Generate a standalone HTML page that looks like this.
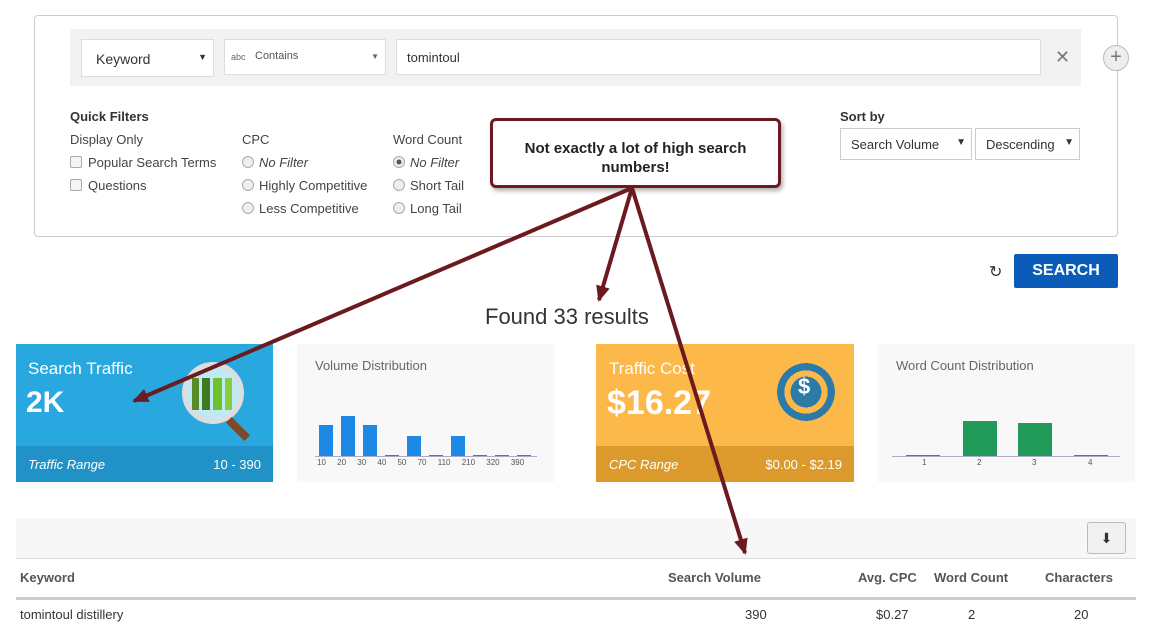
<!DOCTYPE html><html><head><style>
body{margin:0;width:1159px;height:633px;overflow:hidden;background:#fff;font-family:"Liberation Sans",sans-serif;position:relative;color:#333}
.a{position:absolute}
.box{border:1px solid #ccc;border-radius:4px}
.in{background:#fff;border:1px solid #ddd;font-size:13px}
.lbl{font-size:13px;color:#444}
.rd{display:inline-block;width:10px;height:10px;border:1px solid #aaa;border-radius:50%;background:#eee;vertical-align:-1px;margin-right:5px}
.cb{display:inline-block;width:10px;height:10px;border:1px solid #aaa;border-radius:2px;background:#f4f4f4;vertical-align:-1px;margin-right:6px}
.bar{position:absolute;bottom:0;background:#1e88e5;width:14px}
</style></head><body>
<div class="a box" style="left:34px;top:15px;width:1082px;height:220px"></div>
<div class="a" style="left:70px;top:29px;width:1011px;height:57px;background:#f2f2f2"></div>
<div class="a in" style="left:81px;top:39px;width:131px;height:36px"><span class="a" style="left:14px;top:11px;font-size:14px">Keyword</span><span class="a" style="right:6px;top:12px;font-size:9px">▼</span></div>
<div class="a in" style="left:224px;top:39px;width:160px;height:34px"><span class="a" style="left:6px;top:12px;font-size:9px;color:#666">abc</span><span class="a" style="left:30px;top:10px;font-size:11px;color:#555">Contains</span><span class="a" style="right:6px;top:12px;font-size:8px;color:#666">▼</span></div>
<div class="a in" style="left:396px;top:39px;width:643px;height:34px"><span class="a" style="left:10px;top:10px;font-size:13px">tomintoul</span></div>
<div class="a" style="left:1055px;top:47px;font-size:18px;color:#777">✕</div>
<div class="a" style="left:1103px;top:45px;width:24px;height:24px;border:1px solid #bbb;border-radius:50%;background:#eee;text-align:center;line-height:23px;font-size:20px;color:#777">+</div>
<div class="a" style="left:70px;top:109px;font-size:13px;font-weight:bold">Quick Filters</div>
<div class="a lbl" style="left:70px;top:132px">Display Only</div>
<div class="a lbl" style="left:70px;top:155px"><span class="cb"></span>Popular Search Terms</div>
<div class="a lbl" style="left:70px;top:178px"><span class="cb"></span>Questions</div>
<div class="a lbl" style="left:242px;top:132px">CPC</div>
<div class="a lbl" style="left:242px;top:155px"><span class="rd"></span><i>No Filter</i></div>
<div class="a lbl" style="left:242px;top:178px"><span class="rd"></span>Highly Competitive</div>
<div class="a lbl" style="left:242px;top:201px"><span class="rd"></span>Less Competitive</div>
<div class="a lbl" style="left:393px;top:132px">Word Count</div>
<div class="a lbl" style="left:393px;top:155px"><span class="rd" style="background:radial-gradient(#555 30%,#eee 40%)"></span><i>No Filter</i></div>
<div class="a lbl" style="left:393px;top:178px"><span class="rd"></span>Short Tail</div>
<div class="a lbl" style="left:393px;top:201px"><span class="rd"></span>Long Tail</div>
<div class="a" style="left:840px;top:109px;font-size:13px;font-weight:bold">Sort by</div>
<div class="a in" style="left:840px;top:128px;width:130px;height:30px;border-color:#ccc"><span class="a" style="left:10px;top:8px">Search Volume</span><span class="a" style="right:5px;top:8px;font-size:10px">▼</span></div>
<div class="a in" style="left:975px;top:128px;width:103px;height:30px;border-color:#ccc"><span class="a" style="left:10px;top:8px">Descending</span><span class="a" style="right:5px;top:8px;font-size:10px">▼</span></div>
<div class="a" style="left:490px;top:118px;width:285px;height:64px;border:3px solid #6b1a1f;border-radius:6px;background:#fff;box-shadow:2px 3px 4px rgba(0,0,0,.3);text-align:center;font-weight:bold;font-size:15px;color:#222"><div style="margin-top:18px;line-height:19px">Not exactly a lot of high search<br>numbers!</div></div>
<div class="a" style="left:989px;top:262px;font-size:16px;color:#333">↻</div>
<div class="a" style="left:1014px;top:254px;width:104px;height:34px;background:#0b5cb8;border-radius:2px;color:#fff;font-weight:bold;font-size:16px;text-align:center;line-height:34px">SEARCH</div>
<div class="a" style="left:485px;top:304px;font-size:22px;color:#333">Found 33 results</div>
<!-- blue card -->
<div class="a" style="left:16px;top:344px;width:257px;height:138px;background:#29a8e0;color:#fff">
<div class="a" style="left:12px;top:15px;font-size:17px">Search Traffic</div>
<div class="a" style="left:10px;top:42px;font-size:30px;font-weight:bold">2K</div>
<div class="a" style="left:166px;top:18px;width:52px;height:52px;border:5px solid #ddd;border-radius:50%;background:#bfeaf5"></div>
<div class="a" style="left:218px;top:72px;width:8px;height:26px;background:#7a4a2a;transform:rotate(-45deg)"></div>
<div class="a" style="left:176px;top:34px;width:40px;height:32px;background:linear-gradient(90deg,#5a8a2c 0 18%,transparent 18% 25%,#3f7a20 25% 45%,transparent 45% 52%,#6cc12c 52% 75%,transparent 75% 82%,#8acd3c 82%)"></div>
<div class="a" style="left:0;top:102px;width:257px;height:36px;background:#2192c8"></div>
<div class="a" style="left:12px;top:113px;font-size:13px;font-style:italic">Traffic Range</div>
<div class="a" style="right:12px;top:113px;font-size:13px">10 - 390</div></div>
<!-- volume -->
<div class="a" style="left:297px;top:344px;width:257px;height:138px;background:#f8f8f8">
<div class="a" style="left:18px;top:14px;font-size:13px;color:#666">Volume Distribution</div>
<div class="a" style="left:18px;top:68px;width:222px;height:44px;border-bottom:1px solid #aac">
<div class="bar" style="left:4px;height:31px"></div><div class="bar" style="left:26px;height:40px"></div><div class="bar" style="left:48px;height:31px"></div><div class="bar" style="left:70px;height:1px"></div><div class="bar" style="left:92px;height:20px"></div><div class="bar" style="left:114px;height:1px"></div><div class="bar" style="left:136px;height:20px"></div><div class="bar" style="left:158px;height:1px"></div><div class="bar" style="left:180px;height:1px"></div><div class="bar" style="left:202px;height:1px"></div></div>
<div class="a" style="left:20px;top:114px;width:222px;font-size:8px;color:#555;word-spacing:9px;white-space:nowrap">10 20 30 40 50 70 110 210 320 390</div></div>
<!-- orange card -->
<div class="a" style="left:596px;top:344px;width:258px;height:138px;background:#fdb84a;color:#fff">
<div class="a" style="left:13px;top:15px;font-size:17px">Traffic Cost</div>
<div class="a" style="left:11px;top:40px;font-size:34px;font-weight:bold">$16.27</div>
<div class="a" style="left:176px;top:14px;width:68px;height:68px;border-radius:50%;background:radial-gradient(#2b7aa8 0 32%,#fdb84a 32% 45%,#2b7aa8 45% 60%,#fdb84a 60% 75%,#2b7aa8 75%)"></div>
<div class="a" style="left:202px;top:30px;font-size:22px;font-weight:bold">$</div>
<div class="a" style="left:0;top:102px;width:258px;height:36px;background:#dc9a2c"></div>
<div class="a" style="left:13px;top:113px;font-size:13px;font-style:italic">CPC Range</div>
<div class="a" style="right:12px;top:113px;font-size:13px">$0.00 - $2.19</div></div>
<!-- word count -->
<div class="a" style="left:878px;top:344px;width:257px;height:138px;background:#f8f8f8">
<div class="a" style="left:18px;top:14px;font-size:13px;color:#666">Word Count Distribution</div>
<div class="a" style="left:14px;top:68px;width:228px;height:44px;border-bottom:1px solid #aac">
<div class="bar" style="left:14px;width:34px;height:1px;background:#229a5a"></div><div class="bar" style="left:71px;width:34px;height:35px;background:#229a5a"></div><div class="bar" style="left:126px;width:34px;height:33px;background:#229a5a"></div><div class="bar" style="left:182px;width:34px;height:1px;background:#229a5a"></div></div>
<div class="a" style="left:44px;top:114px;font-size:8px;color:#555">1</div><div class="a" style="left:99px;top:114px;font-size:8px;color:#555">2</div><div class="a" style="left:154px;top:114px;font-size:8px;color:#555">3</div><div class="a" style="left:210px;top:114px;font-size:8px;color:#555">4</div></div>
<!-- table -->
<div class="a" style="left:16px;top:518px;width:1120px;height:40px;background:#f7f7f7"></div>
<div class="a" style="left:1087px;top:522px;width:37px;height:30px;border:1px solid #bbb;border-radius:3px;background:#f1f1f1;text-align:center;line-height:30px;font-size:14px">⬇</div>
<div class="a" style="left:16px;top:558px;width:1120px;height:38px;border-top:1px solid #ddd;border-bottom:3px solid #ccc;font-size:13px;font-weight:bold;color:#555">
<span class="a" style="left:4px;top:11px">Keyword</span><span class="a" style="left:652px;top:11px">Search Volume</span><span class="a" style="left:842px;top:11px">Avg. CPC</span><span class="a" style="left:918px;top:11px">Word Count</span><span class="a" style="left:1029px;top:11px">Characters</span></div>
<div class="a" style="left:20px;top:607px;font-size:13px">tomintoul distillery</div>
<div class="a" style="left:745px;top:607px;font-size:13px">390</div>
<div class="a" style="left:876px;top:607px;font-size:13px">$0.27</div>
<div class="a" style="left:968px;top:607px;font-size:13px">2</div>
<div class="a" style="left:1074px;top:607px;font-size:13px">20</div>
<svg class="a" style="left:0;top:0" width="1159" height="633"><defs><marker id="m" markerUnits="userSpaceOnUse" markerWidth="16" markerHeight="14" refX="14" refY="7" orient="auto"><path d="M0,0L16,7L0,14z" fill="#6b1a1f"/></marker></defs>
<g stroke="#6b1a1f" stroke-width="4" fill="none" marker-end="url(#m)"><line x1="632" y1="188" x2="134" y2="401"/><line x1="632" y1="188" x2="599" y2="300"/><line x1="632" y1="188" x2="745" y2="553"/></g></svg>
</body></html>
